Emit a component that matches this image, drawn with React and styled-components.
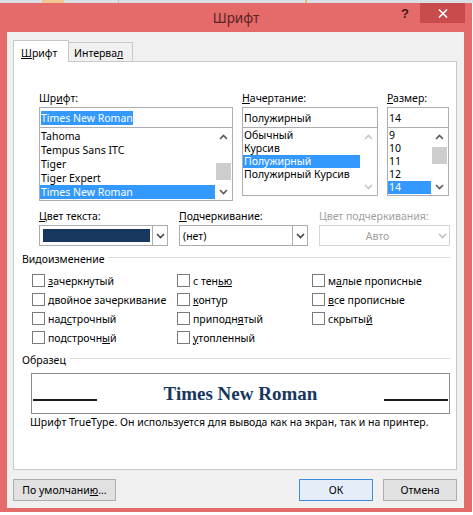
import React from "react";
import styled, { createGlobalStyle, css } from "styled-components";

const GlobalStyle = createGlobalStyle`
  html, body { margin: 0; padding: 0; background: #ffffff; }
  body {
    font-family: "Noto Sans", "Liberation Sans", sans-serif;
    font-size: 10.5px;
    color: #000;
  }
  * { box-sizing: border-box; }
`;

const Desktop = styled.div`
  width: 473px;
  height: 515px;
  overflow: hidden;
  background: #ffffff;
`;

/* strip of the ribbon window lying behind the dialog */
const Backdrop = styled.div`
  height: 3px;
  background: linear-gradient(
    to right,
    #d9e0e8 0 42px,
    #f2c690 42px 64px,
    #d9e0e8 64px 118px,
    #b7c3d1 118px 119px,
    #d9e0e8 119px 305px,
    #e9b872 305px 307px,
    #d9e0e8 307px
  );
`;

const Window = styled.div`
  width: 472px;
  background: #e56a6a;
  display: flex;
  flex-direction: column;
  padding-bottom: 4px;
`;

const TitleBar = styled.div`
  height: 29px;
  display: grid;
  grid-template-columns: 1fr auto 1fr;
  padding: 0 7px;
`;

const Title = styled.div`
  grid-column: 2;
  font-size: 13.5px;
  line-height: 29px;
  padding-top: 1px;
  color: #5a2424;
`;

const Controls = styled.div`
  display: flex;
  justify-content: flex-end;
  align-items: flex-start;
`;

const HelpGlyph = styled.span`
  font-family: "Liberation Sans", sans-serif;
  font-weight: 700;
  font-size: 13px;
  line-height: 20px;
  padding-top: 1px;
  color: #3d1717;
  margin-right: 11px;
`;

const CloseButton = styled.div`
  width: 45px;
  height: 20px;
  background: #c94b4b;
  display: flex;
  align-items: center;
  justify-content: center;
`;

const Body = styled.div`
  margin: 0 8px 0 7px;
  height: 476px;
  background: #f0f0f0;
  padding: 8px 7px 7px 6px;
  display: flex;
  flex-direction: column;
`;

const TabStrip = styled.div`
  display: flex;
  align-items: flex-end;
  height: 22px;
  margin-bottom: -1px;
  position: relative;
  z-index: 1;
`;

const Tab = styled.div`
  display: flex;
  align-items: center;
  border: 1px solid #c8c8c8;
  ${(p) =>
    p.$active
      ? css`
          width: 56px;
          height: 22px;
          padding: 2px 0 0 7px;
          background: #ffffff;
          border-bottom: none;
        `
      : css`
          width: 64px;
          height: 20px;
          padding: 2px 0 0 5px;
          background: #f0f0f0;
          border-left: none;
        `}
`;

const Panel = styled.div`
  height: 409px;
  border: 1px solid #c8c8c8;
  background: #ffffff;
  display: flex;
  flex-direction: column;
`;

const Acc = styled.span`
  text-decoration: underline;
  text-underline-offset: 1px;
`;

const FontGrid = styled.div`
  margin: 29px 0 0 25px;
  display: grid;
  grid-template-columns: 194px 136px 62px;
  column-gap: 9px;
  align-items: start;
`;

const Field = styled.div`
  display: flex;
  flex-direction: column;
`;

const Label = styled.div`
  height: 15px;
  line-height: 15px;
  margin-bottom: 1px;
  white-space: nowrap;
  color: ${(p) => (p.$disabled ? "#a0a0a0" : "#000")};
`;

const TextBox = styled.div`
  height: 21px;
  border: 1px solid #abadb3;
  background: #fff;
  display: flex;
  align-items: center;
  padding-left: 1px;
  white-space: nowrap;
`;

const Selected = styled.span`
  background: #3399ff;
  color: #fff;
  line-height: 14px;
`;

const ListBox = styled.div`
  height: ${(p) => p.$h}px;
  border: 1px solid #abadb3;
  border-top: none;
  background: #fff;
  display: flex;
`;

const Items = styled.div`
  flex: 1;
  padding-top: 1px;
  overflow: hidden;
`;

const Item = styled.div`
  height: ${(p) => p.$row}px;
  line-height: ${(p) => p.$row}px;
  padding-left: 1px;
  white-space: nowrap;
  ${(p) =>
    p.$selected &&
    css`
      background: #3399ff;
      color: #fff;
    `}
`;

const ScrollBar = styled.div`
  width: 17px;
  display: flex;
  flex-direction: column;
`;

const ScrollArrow = styled.div`
  height: 17px;
  display: flex;
  align-items: center;
  justify-content: center;
`;

const Track = styled.div`
  flex: 1;
  display: flex;
  flex-direction: column;
  align-items: center;
`;

const Thumb = styled.div`
  width: 15px;
  background: #cdcdcd;
`;

const ComboRow = styled.div`
  margin: 8px 0 0 25px;
  display: grid;
  grid-template-columns: 129px 129px 131px;
  column-gap: 11px;
`;

const Combo = styled.div`
  height: 21px;
  border: 1px solid ${(p) => (p.$disabled ? "#d5d5d5" : "#acacac")};
  background: #fff;
  display: flex;
`;

const ComboValue = styled.div`
  flex: 1;
  display: flex;
  align-items: center;
  padding: 0 2px 0 3px;
  white-space: nowrap;
  justify-content: ${(p) => (p.$center ? "center" : "flex-start")};
  color: ${(p) => (p.$disabled ? "#a0a0a0" : "#000")};
`;

const Swatch = styled.div`
  flex: 1;
  height: 13px;
  background: ${(p) => p.$color};
`;

const ComboArrow = styled.div`
  width: 15px;
  display: flex;
  align-items: center;
  justify-content: center;
  border-left: 1px solid ${(p) => (p.$disabled ? "transparent" : "#acacac")};
`;

const GroupHead = styled.div`
  margin: 6px 6px 0 8px;
  height: 15px;
  display: flex;
  align-items: center;
  gap: 4px;
  line-height: 15px;
`;

const GroupLine = styled.div`
  flex: 1;
  height: 1px;
  align-self: flex-start;
  margin-top: 5px;
  background: #dcdcdc;
`;

const CheckGrid = styled.div`
  margin: 4px 0 0 18px;
  display: grid;
  grid-template-columns: 145px 135px 1fr;
  grid-auto-rows: 19px;
  grid-auto-flow: column;
  grid-template-rows: repeat(4, 19px);
`;

const CheckRow = styled.label`
  display: flex;
  align-items: center;
  gap: 3px;
  white-space: nowrap;
`;

const Box = styled.span`
  width: 13px;
  height: 13px;
  border: 1px solid #7a7a7a;
  background: #fff;
  flex: none;
`;

const Preview = styled.div`
  margin: 5px 0 0 17px;
  width: 419px;
  height: 41px;
  border: 1px solid #8c8c8c;
  display: flex;
  align-items: center;
  justify-content: space-between;
  padding: 0 1px 0 1px;
`;

const Rule = styled.span`
  width: 64px;
  height: 2px;
  margin-top: 12px;
  background: #1b1b1b;
`;

const Sample = styled.span`
  font-family: "Liberation Serif", "Times New Roman", serif;
  font-weight: 700;
  font-size: 19px;
  color: #17375e;
`;

const Note = styled.div`
  margin: 1px 0 0 16px;
  line-height: 15px;
  white-space: nowrap;
`;

const ButtonRow = styled.div`
  margin-top: 9px;
  display: flex;
  gap: 10px;
`;

const Button = styled.button`
  height: 22px;
  width: ${(p) => p.$w}px;
  padding: 0;
  font: inherit;
  color: #000;
  border: 1px solid ${(p) => (p.$default ? "#3c8de0" : "#adadad")};
  background: ${(p) => (p.$default ? "#e5eef8" : "#e1e1e1")};
  ${(p) => p.$push && "margin-left: auto;"}
`;

const Chevron = ({ up, color = "#5a5a5a" }) => (
  <svg width="9" height="6" viewBox="0 0 9 6">
    <path
      d={up ? "M1 5 L4.5 1.5 L8 5" : "M1 1 L4.5 4.5 L8 1"}
      fill="none"
      stroke={color}
      strokeWidth="1.6"
    />
  </svg>
);

function List({ items, selected, h, row, thumb }) {
  const arrowColor = thumb ? "#5a5a5a" : "#c6c6c6";
  return (
    <ListBox $h={h}>
      <Items>
        {items.map((it, i) => (
          <Item key={it} $row={row} $selected={i === selected}>
            {it}
          </Item>
        ))}
      </Items>
      <ScrollBar>
        <ScrollArrow>
          <Chevron up color={arrowColor} />
        </ScrollArrow>
        <Track>
          {thumb && (
            <Thumb style={{ marginTop: thumb.offset, height: thumb.size }} />
          )}
        </Track>
        <ScrollArrow>
          <Chevron color={arrowColor} />
        </ScrollArrow>
      </ScrollBar>
    </ListBox>
  );
}

const effects = [
  [<Acc key="a">з</Acc>, "ачеркнутый"],
  [<Acc key="a">д</Acc>, "войное зачеркивание"],
  ["над", <Acc key="a">с</Acc>, "трочный"],
  ["подстрочн", <Acc key="a">ы</Acc>, "й"],
  ["с тен", <Acc key="a">ью</Acc>],
  [<Acc key="a">к</Acc>, "онтур"],
  ["приподн", <Acc key="a">я</Acc>, "тый"],
  [<Acc key="a">у</Acc>, "топленный"],
  ["м", <Acc key="a">а</Acc>, "лые прописные"],
  [<Acc key="a">в</Acc>, "се прописные"],
  ["скрыты", <Acc key="a">й</Acc>],
];

export default function App() {
  return (
    <>
      <GlobalStyle />
      <Desktop>
        <Backdrop />
        <Window>
          <TitleBar>
            <Title>Шрифт</Title>
            <Controls>
              <HelpGlyph>?</HelpGlyph>
              <CloseButton>
                <svg width="10" height="9" viewBox="0 0 10 9">
                  <path
                    d="M1 0.5 L9 8.5 M9 0.5 L1 8.5"
                    stroke="#ffffff"
                    strokeWidth="1.6"
                  />
                </svg>
              </CloseButton>
            </Controls>
          </TitleBar>
          <Body>
            <TabStrip>
              <Tab $active>
                <span>
                  <Acc>Ш</Acc>рифт
                </span>
              </Tab>
              <Tab>
                <span>
                  Интерва<Acc>л</Acc>
                </span>
              </Tab>
            </TabStrip>
            <Panel>
              <FontGrid>
                <Field>
                  <Label>
                    Шр<Acc>и</Acc>фт:
                  </Label>
                  <TextBox>
                    <Selected>Times New Roman</Selected>
                  </TextBox>
                  <List
                    h={73}
                    row={14}
                    selected={4}
                    items={["Tahoma", "Tempus Sans ITC", "Tiger", "Tiger Expert", "Times New Roman"]}
                    thumb={{ offset: 18, size: 17 }}
                  />
                </Field>
                <Field>
                  <Label>
                    <Acc>Н</Acc>ачертание:
                  </Label>
                  <TextBox>Полужирный</TextBox>
                  <List
                    h={68}
                    row={13}
                    selected={2}
                    items={["Обычный", "Курсив", "Полужирный", "Полужирный Курсив"]}
                  />
                </Field>
                <Field>
                  <Label>
                    <Acc>Р</Acc>азмер:
                  </Label>
                  <TextBox>14</TextBox>
                  <List
                    h={68}
                    row={13}
                    selected={4}
                    items={["9", "10", "11", "12", "14"]}
                    thumb={{ offset: 2, size: 17 }}
                  />
                </Field>
              </FontGrid>

              <ComboRow>
                <Field>
                  <Label>
                    <Acc>Ц</Acc>вет текста:
                  </Label>
                  <Combo>
                    <ComboValue>
                      <Swatch $color="#17375e" />
                    </ComboValue>
                    <ComboArrow>
                      <Chevron color="#444" />
                    </ComboArrow>
                  </Combo>
                </Field>
                <Field>
                  <Label>
                    <Acc>П</Acc>одчеркивание:
                  </Label>
                  <Combo>
                    <ComboValue>(нет)</ComboValue>
                    <ComboArrow>
                      <Chevron color="#444" />
                    </ComboArrow>
                  </Combo>
                </Field>
                <Field>
                  <Label $disabled>Цвет подчеркивания:</Label>
                  <Combo $disabled>
                    <ComboValue $disabled $center>
                      Авто
                    </ComboValue>
                    <ComboArrow $disabled>
                      <Chevron color="#c2c2c2" />
                    </ComboArrow>
                  </Combo>
                </Field>
              </ComboRow>

              <GroupHead>
                <span>Видоизменение</span>
                <GroupLine />
              </GroupHead>
              <CheckGrid>
                {effects.map((parts, i) => (
                  <CheckRow key={i}>
                    <Box />
                    <span>{parts}</span>
                  </CheckRow>
                ))}
              </CheckGrid>

              <GroupHead>
                <span>Образец</span>
                <GroupLine />
              </GroupHead>
              <Preview>
                <Rule />
                <Sample>Times New Roman</Sample>
                <Rule />
              </Preview>
              <Note>
                Шрифт TrueType. Он используется для вывода как на экран, так и на принтер.
              </Note>
            </Panel>
            <ButtonRow>
              <Button $w={103}>
                По умолчани<Acc>ю</Acc>...
              </Button>
              <Button $w={74} $default $push>
                ОК
              </Button>
              <Button $w={74}>Отмена</Button>
            </ButtonRow>
          </Body>
        </Window>
      </Desktop>
    </>
  );
}
